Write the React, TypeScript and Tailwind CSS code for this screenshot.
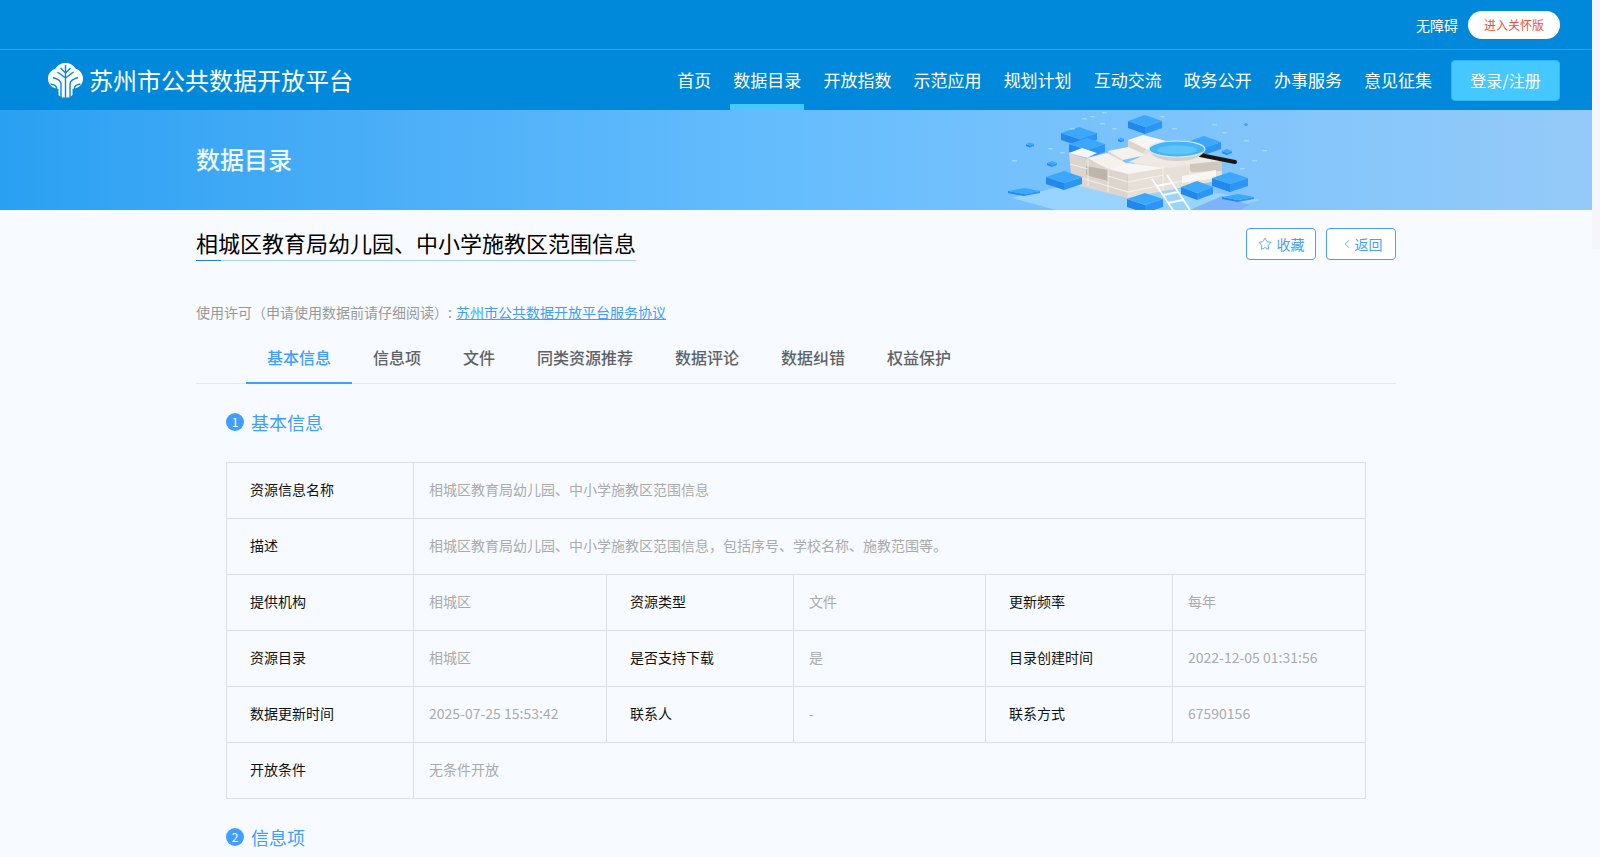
import { ChevronLeft, Star } from "lucide-react";

const navItems = ["首页", "数据目录", "开放指数", "示范应用", "规划计划", "互动交流", "政务公开", "办事服务", "意见征集"];
const tabs = ["基本信息", "信息项", "文件", "同类资源推荐", "数据评论", "数据纠错", "权益保护"];
const desc = "相城区教育局幼儿园、中小学施教区范围信息";

const rows = [
  ["提供机构", "相城区", "资源类型", "文件", "更新频率", "每年"],
  ["资源目录", "相城区", "是否支持下载", "是", "目录创建时间", "2022-12-05 01:31:56"],
  ["数据更新时间", "2025-07-25 15:53:42", "联系人", "-", "联系方式", "67590156"],
];

function Logo() {
  return (
    <svg width="37" height="36" viewBox="0 0 37 36" className="shrink-0">
      <path d="M18.500 1c4.500 0 8 2 10 5.500 4.500 1.500 7.500 5.500 7.500 10 0 4.500-2.500 8-6.500 9.500l-4 1v6l-3 2.500h-8l-3-2.500v-6l-4-1C3.500 24.500 1 21 1 16.500c0-4.500 3-8.500 7.500-10C10.500 3 14 1 18.500 1z" fill="#fff" />
      <g fill="none" stroke="#0089da" strokeWidth="1.400">
        <path d="M18.500 3v33M18.500 11l-5-5M18.500 11l5-5M18.500 16l-8-6M18.500 16l8-6" />
        <path d="M14 36V22c0-3-3-5-8-6.500M23 36V22c0-3 3-5 8-6.500" />
        <path d="M9.500 36V26c0-2-3-3.500-6-4M27.500 36V26c0-2 3-3.500 6-4" />
      </g>
    </svg>
  );
}

function Block({ x, y, w, h, d }: { x: number; y: number; w: number; h: number; d: number }) {
  return (
    <g>
      <polygon points={`${x - w},${y} ${x},${y + h} ${x},${y + h + d} ${x - w},${y + d}`} fill="#2288ec" />
      <polygon points={`${x + w},${y} ${x},${y + h} ${x},${y + h + d} ${x + w},${y + d}`} fill="#2d95f3" />
      <polygon points={`${x - w},${y} ${x},${y - h} ${x + w},${y} ${x},${y + h}`} fill="#3ba8fc" />
    </g>
  );
}

const specks = [
  [1070, 128], [1082, 118], [1100, 123], [1112, 128], [1048, 148], [1060, 152], [1090, 116], [1160, 116], [1172, 128],
  [1212, 124], [1222, 132], [1244, 140], [1252, 160], [1262, 150], [1240, 168], [1236, 186], [1012, 160], [1102, 112],
];

function Illustration() {
  return (
    <svg viewBox="985 110 320 100" width="320" height="100" className="absolute top-0 left-[985px]">
      <polygon points="1012,198 1072,184 1200,190 1260,200 1220,210 1056,210" fill="#98d4ff" />
      <polygon points="1190,210 1222,196 1250,205 1240,210" fill="#7cb4f7" />
      <Block x={1024} y={191} w={16} h={3} d={2} />
      <Block x={1079} y={133} w={18} h={6} d={7} />
      <Block x={1087} y={144} w={18} h={6} d={8} />
      <Block x={1145} y={121} w={17} h={6} d={7} />
      <Block x={1204} y={142} w={17} h={6} d={7} />
      <Block x={1030} y={144} w={4} h={1.500} d={2} />
      <Block x={1052} y={163} w={5} h={2} d={2} />
      <Block x={1121} y={139} w={3} h={1.500} d={2} />
      <Block x={1227} y={151} w={5} h={2} d={2} />
      <Block x={1246} y={124} w={2} h={1} d={1} />
      {specks.map(([x, y]) => (
        <rect key={`${x}-${y}`} x={x} y={y} width="5" height="1.500" rx="0.700" fill="#a8e6ff" opacity="0.700" />
      ))}
      {/* stack of white blocks */}
      <polygon points="1128,140 1128,152 1148,158 1148,146" fill="#dcd5cd" />
      <polygon points="1108,151 1123,159 1123,170 1108,165" fill="#dcd5cd" />
      <polygon points="1148,146 1222,160 1222,180 1127,198 1128,172" fill="#e6e0d9" />
      <polygon points="1069,153 1128,172 1127,198 1072,184" fill="#dcd5cd" />
      <polygon points="1128,140 1143,135 1178,144 1148,150" fill="#f8f6f3" />
      <polygon points="1108,151 1128,147 1146,155 1123,160" fill="#f5f2ee" />
      <polygon points="1069,153 1082,148 1097,153 1087,158" fill="#f8f6f3" />
      <polygon points="1087,158 1107,153 1128,164 1108,169" fill="#f5f2ee" />
      <polygon points="1108,169 1128,163 1165,168 1128,174" fill="#f8f6f3" />
      <polygon points="1128,162 1150,153 1210,155 1222,162 1165,168" fill="#eee9e3" />
      <polygon points="1086,166 1108,170 1108,181 1086,175" fill="#bdb5ab" />
      <polygon points="1190,164 1222,161 1222,171 1190,172" fill="#cfc8bf" />
      <polygon points="1182,176 1216,170 1216,178 1182,183" fill="#f8f6f3" />
      <g stroke="#f8f6f3" strokeWidth="0.800" fill="none">
        <path d="M1070,164l18,5M1108,176l20,6M1071,175l57,17M1088,158v28M1108,170v22" />
        <path d="M1128,182l35-7M1128,192l54-11M1163,166v24M1190,170v14" />
      </g>
      <Block x={1064} y={177} w={18} h={6} d={7} />
      <Block x={1230} y={178} w={18} h={6} d={8} />
      <Block x={1197} y={187} w={16} h={6} d={7} />
      <Block x={1145} y={199} w={18} h={6} d={8} />
      <Block x={1238} y={197} w={16} h={3} d={2} />
      <line x1="1200" y1="155" x2="1235" y2="162" stroke="#1d1512" strokeWidth="4" strokeLinecap="round" />
      <path d="M1149 149c2 8 12 12 28 12s26-4 28-12z" fill="#d5cfc8" />
      <ellipse cx="1177" cy="149" rx="28" ry="8" fill="#45b5f6" stroke="#dbe6ef" strokeWidth="1.200" />
      <ellipse cx="1177" cy="150" rx="20" ry="4.500" fill="#6fd0fb" opacity="0.600" />
      <g stroke="#fff" strokeWidth="1.800" fill="none">
        <path d="M1152 179l21 31M1167 175l23 35" />
        <path d="M1157 186l15-3M1163 195l15-3M1168 203l15-3" />
      </g>
    </svg>
  );
}

function Th({ children, first }: { children: string; first?: boolean }) {
  return (
    <th className={`border border-[#dcdfe6] pb-[4px] text-left font-normal text-[#111111] ${first ? "pl-[23px]" : "pl-[23px]"}`}>{children}</th>
  );
}

function Td({ children, colSpan }: { children: string; colSpan?: number }) {
  return (
    <td colSpan={colSpan} className="border border-[#dcdfe6] pb-[4px] pl-[15px] text-[#aaaaaa]">
      {children}
    </td>
  );
}

function SectionTitle({ num, children }: { num: number; children: string }) {
  return (
    <div className="flex h-7 items-center gap-[7px] text-[18px] text-[#409eff]">
      <span className="grid h-[18px] w-[18px] place-items-center rounded-full bg-[#409eff] text-xs text-white">{num}</span>
      {children}
    </div>
  );
}

export default function App() {
  return (
    <div className="flex h-screen overflow-hidden bg-[#f7fbff] font-['Noto_Sans_CJK_SC','Noto_Sans',sans-serif]">
      <div className="w-[1592px] shrink-0">
        <header className="bg-[#0089da] text-white">
          <div className="flex h-[49px] items-center justify-end pr-8">
            <span className="text-sm">无障碍</span>
            <button className="ml-[10px] h-7 w-[92px] rounded-full bg-white text-xs text-[#e5533d]">进入关怀版</button>
          </div>
          <div className="flex h-[61px] items-center border-t border-[#2f9fe6] pr-8 pl-[47px]">
            <Logo />
            <span className="ml-[5px] text-2xl leading-none whitespace-nowrap">苏州市公共数据开放平台</span>
            <nav className="ml-auto flex h-full items-center gap-[22.100px] text-[17px]">
              {navItems.map((item) => (
                <a key={item} className="relative flex h-full items-center whitespace-nowrap">
                  {item}
                  {item === "数据目录" && <span className="absolute inset-x-[-3px] bottom-0 h-[6px] bg-[#45c8ff]" />}
                </a>
              ))}
            </nav>
            <button className="ml-[19px] h-[41px] w-[109px] rounded border border-[#30b7f6] bg-[#45c8ff] text-base">登录/注册</button>
          </div>
        </header>

        <div className="relative h-[100px] overflow-hidden bg-gradient-to-r from-[#29a0f2] via-[#66bdfd] to-[#94caf9]">
          <Illustration />
          <div className="mx-auto flex h-full w-[1200px] items-center pb-[2px] text-2xl font-medium text-white/90">数据目录</div>
        </div>

        <main className="mx-auto w-[1200px]">
          <div className="flex items-start justify-between pt-[18px]">
            <h1 className="relative -mt-px border-b border-[#b3d4f5] pb-[2px] text-[22px] leading-[31px] text-black">
              {desc}
              <span className="absolute bottom-[-1px] left-0 h-px w-[25px] bg-[#1f7fd8]" />
            </h1>
            <div className="flex gap-[10px]">
              <button className="flex h-8 w-[70px] items-center justify-center gap-[5px] rounded border border-[#4a9ff5] bg-white text-sm text-[#4a9ff5]">
                <Star size={14} strokeWidth={1.500} />
                收藏
              </button>
              <button className="flex h-8 w-[70px] items-center justify-center gap-px rounded border border-[#4a9ff5] bg-white text-sm text-[#4a9ff5]">
                <ChevronLeft size={14} strokeWidth={1.500} />
                返回
              </button>
            </div>
          </div>

          <p className="mt-[41px] text-sm leading-[20px] text-[#999999]">
            使用许可（申请使用数据前请仔细阅读）: <a className="ml-px text-[#409eff] underline">苏州市公共数据开放平台服务协议</a>
          </p>

          <div className="mt-[15px] flex h-[47px] border-b border-[#e4e7ed] pl-[50px]">
            {tabs.map((tab, i) => (
              <div
                key={tab}
                className={`h-[47px] border-b-2 px-[21px] pt-[8px] text-base leading-6 font-medium whitespace-nowrap ${
                  i === 0 ? "border-[#409eff] text-[#409eff]" : "border-transparent text-[#606266]"
                }`}
              >
                {tab}
              </div>
            ))}
          </div>

          <div className="px-[30px]">
            <div className="pt-6">
              <SectionTitle num={1}>基本信息</SectionTitle>
            </div>
            <table className="mt-[26px] w-[1139px] table-fixed border-collapse text-sm">
              <colgroup>
                <col className="w-[187px]" />
                <col className="w-[193px]" />
                <col className="w-[187px]" />
                <col className="w-[192px]" />
                <col className="w-[187px]" />
                <col className="w-[193px]" />
              </colgroup>
              <tbody>
                <tr className="h-14">
                  <Th first>资源信息名称</Th>
                  <Td colSpan={5}>{desc}</Td>
                </tr>
                <tr className="h-14">
                  <Th first>描述</Th>
                  <Td colSpan={5}>{`${desc}，包括序号、学校名称、施教范围等。`}</Td>
                </tr>
                {rows.map((r) => (
                  <tr key={r[0]} className="h-14">
                    <Th first>{r[0]}</Th>
                    <Td>{r[1]}</Td>
                    <Th>{r[2]}</Th>
                    <Td>{r[3]}</Td>
                    <Th>{r[4]}</Th>
                    <Td>{r[5]}</Td>
                  </tr>
                ))}
                <tr className="h-14">
                  <Th first>开放条件</Th>
                  <Td colSpan={5}>无条件开放</Td>
                </tr>
              </tbody>
            </table>
            <div className="mt-6">
              <SectionTitle num={2}>信息项</SectionTitle>
            </div>
          </div>
        </main>
      </div>
      <div className="h-[249px] w-2 bg-[#f4f6fb]" />
    </div>
  );
}
